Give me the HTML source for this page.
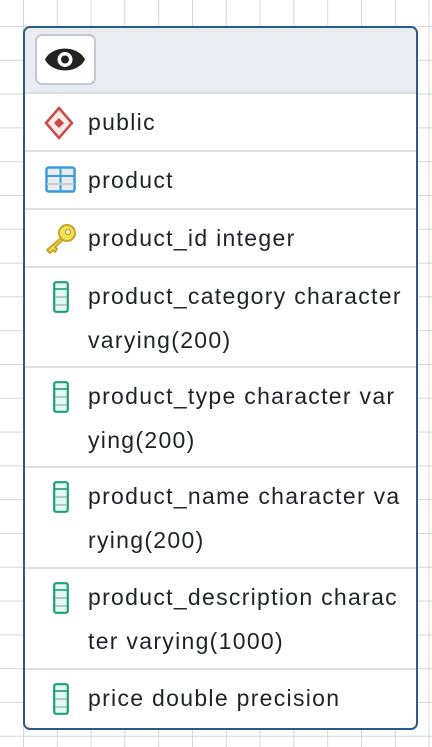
<!DOCTYPE html>
<html><head><style>
body{margin:0;width:432px;height:747px;overflow:hidden;background-color:#fff;
background-image:linear-gradient(#d3d7e0 1px,transparent 1px),linear-gradient(90deg,#d3d7e0 1px,transparent 1px);
background-size:33.8px 33.8px;background-position:23px 26px;font-family:"Liberation Sans",sans-serif;}
.box{position:absolute;left:23px;top:26px;width:391px;height:700px;border:2px solid #2e5b85;border-radius:7px;background:#fff;overflow:hidden}
.hdr{height:64px;background:#e9edf2;border-bottom:2px solid #dde1e6;position:relative}
.btn{position:absolute;left:10px;top:6px;width:61px;height:51px;background:#fff;border:2px solid #c3c9d2;border-radius:7px;box-sizing:border-box}
.row{position:relative;border-bottom:2px solid #dde1e6;padding:6px 0 6px 63px;font-size:23px;letter-spacing:1.3px;line-height:44px;color:#1f2227;box-sizing:border-box;white-space:nowrap}
.row:last-child{border-bottom:none}
.ic{position:absolute;left:20px}
</style></head><body>
<div class="box">
<div class="hdr"><div class="btn"><svg width="57" height="47" viewBox="0 0 57 47" style="position:absolute;left:0;top:0"><path d="M8 23.5 C15 9 41 9 48 23.5 C41 38 15 38 8 23.5Z" fill="#222"/><circle cx="28" cy="23.5" r="7.5" fill="#fff"/><circle cx="28" cy="23.5" r="4" fill="#222"/></svg></div></div>
<div class="row" style="height:58px">public<svg class="ic" style="left:19px;top:12px" width="30" height="34" viewBox="0 0 30 34"><path d="M15 2 L28 17 L15 32 L2 17Z" fill="#fde8e8" stroke="#c94a4a" stroke-width="2.5"/><path d="M15 12 L20 17 L15 22 L10 17Z" fill="#c94a4a"/></svg></div>
<div class="row" style="height:58px">product<svg class="ic" style="left:20px;top:14px" width="32" height="28" viewBox="0 0 32 28"><rect x="1.5" y="1.5" width="28" height="24" rx="2" fill="#e9ecef" stroke="#3a9ce0" stroke-width="2.5"/><path d="M1.5 10H29.5M15.5 1.5V25.5" stroke="#3a9ce0" stroke-width="2"/><path d="M2 18H29" stroke="#c8ccd0" stroke-width="2"/></svg></div>
<div class="row" style="height:58px">product_id integer<svg class="ic" style="left:19px;top:12px" width="34" height="34" viewBox="0 0 34 34"><circle cx="23" cy="11" r="8" fill="#f2e25a" stroke="#c9a52a" stroke-width="2"/><circle cx="24" cy="10" r="2.5" fill="#fff" stroke="#c9a52a" stroke-width="1.5"/><path d="M17 16 L3 28 L6 31 L9 28 L11 30 L13 27 L11 25 L19 18Z" fill="#f2e25a" stroke="#c9a52a" stroke-width="2" stroke-linejoin="round"/></svg></div>
<div class="row" style="height:100px">product_category character<br>varying(200)<svg class="ic" style="left:28px;top:13px" width="16" height="32" viewBox="0 0 16 32"><rect x="1.2" y="1.2" width="13.6" height="29.6" rx="2" fill="#e2fbf3" stroke="#1f9e7c" stroke-width="2.2"/><path d="M2 8H14M2 16H14M2 24H14" stroke="#a8b8b3" stroke-width="1.5"/><path d="M2 8H14" stroke="#1f9e7c" stroke-width="1.5"/></svg></div>
<div class="row" style="height:100px">product_type character var<br>ying(200)<svg class="ic" style="left:28px;top:13px" width="16" height="32" viewBox="0 0 16 32"><rect x="1.2" y="1.2" width="13.6" height="29.6" rx="2" fill="#e2fbf3" stroke="#1f9e7c" stroke-width="2.2"/><path d="M2 8H14M2 16H14M2 24H14" stroke="#a8b8b3" stroke-width="1.5"/><path d="M2 8H14" stroke="#1f9e7c" stroke-width="1.5"/></svg></div>
<div class="row" style="height:101px">product_name character va<br>rying(200)<svg class="ic" style="left:28px;top:13px" width="16" height="32" viewBox="0 0 16 32"><rect x="1.2" y="1.2" width="13.6" height="29.6" rx="2" fill="#e2fbf3" stroke="#1f9e7c" stroke-width="2.2"/><path d="M2 8H14M2 16H14M2 24H14" stroke="#a8b8b3" stroke-width="1.5"/><path d="M2 8H14" stroke="#1f9e7c" stroke-width="1.5"/></svg></div>
<div class="row" style="height:101px">product_description charac<br>ter varying(1000)<svg class="ic" style="left:28px;top:13px" width="16" height="32" viewBox="0 0 16 32"><rect x="1.2" y="1.2" width="13.6" height="29.6" rx="2" fill="#e2fbf3" stroke="#1f9e7c" stroke-width="2.2"/><path d="M2 8H14M2 16H14M2 24H14" stroke="#a8b8b3" stroke-width="1.5"/><path d="M2 8H14" stroke="#1f9e7c" stroke-width="1.5"/></svg></div>
<div class="row" style="height:58px">price double precision<svg class="ic" style="left:28px;top:13px" width="16" height="32" viewBox="0 0 16 32"><rect x="1.2" y="1.2" width="13.6" height="29.6" rx="2" fill="#e2fbf3" stroke="#1f9e7c" stroke-width="2.2"/><path d="M2 8H14M2 16H14M2 24H14" stroke="#a8b8b3" stroke-width="1.5"/><path d="M2 8H14" stroke="#1f9e7c" stroke-width="1.5"/></svg></div>
</div>
</body></html>
